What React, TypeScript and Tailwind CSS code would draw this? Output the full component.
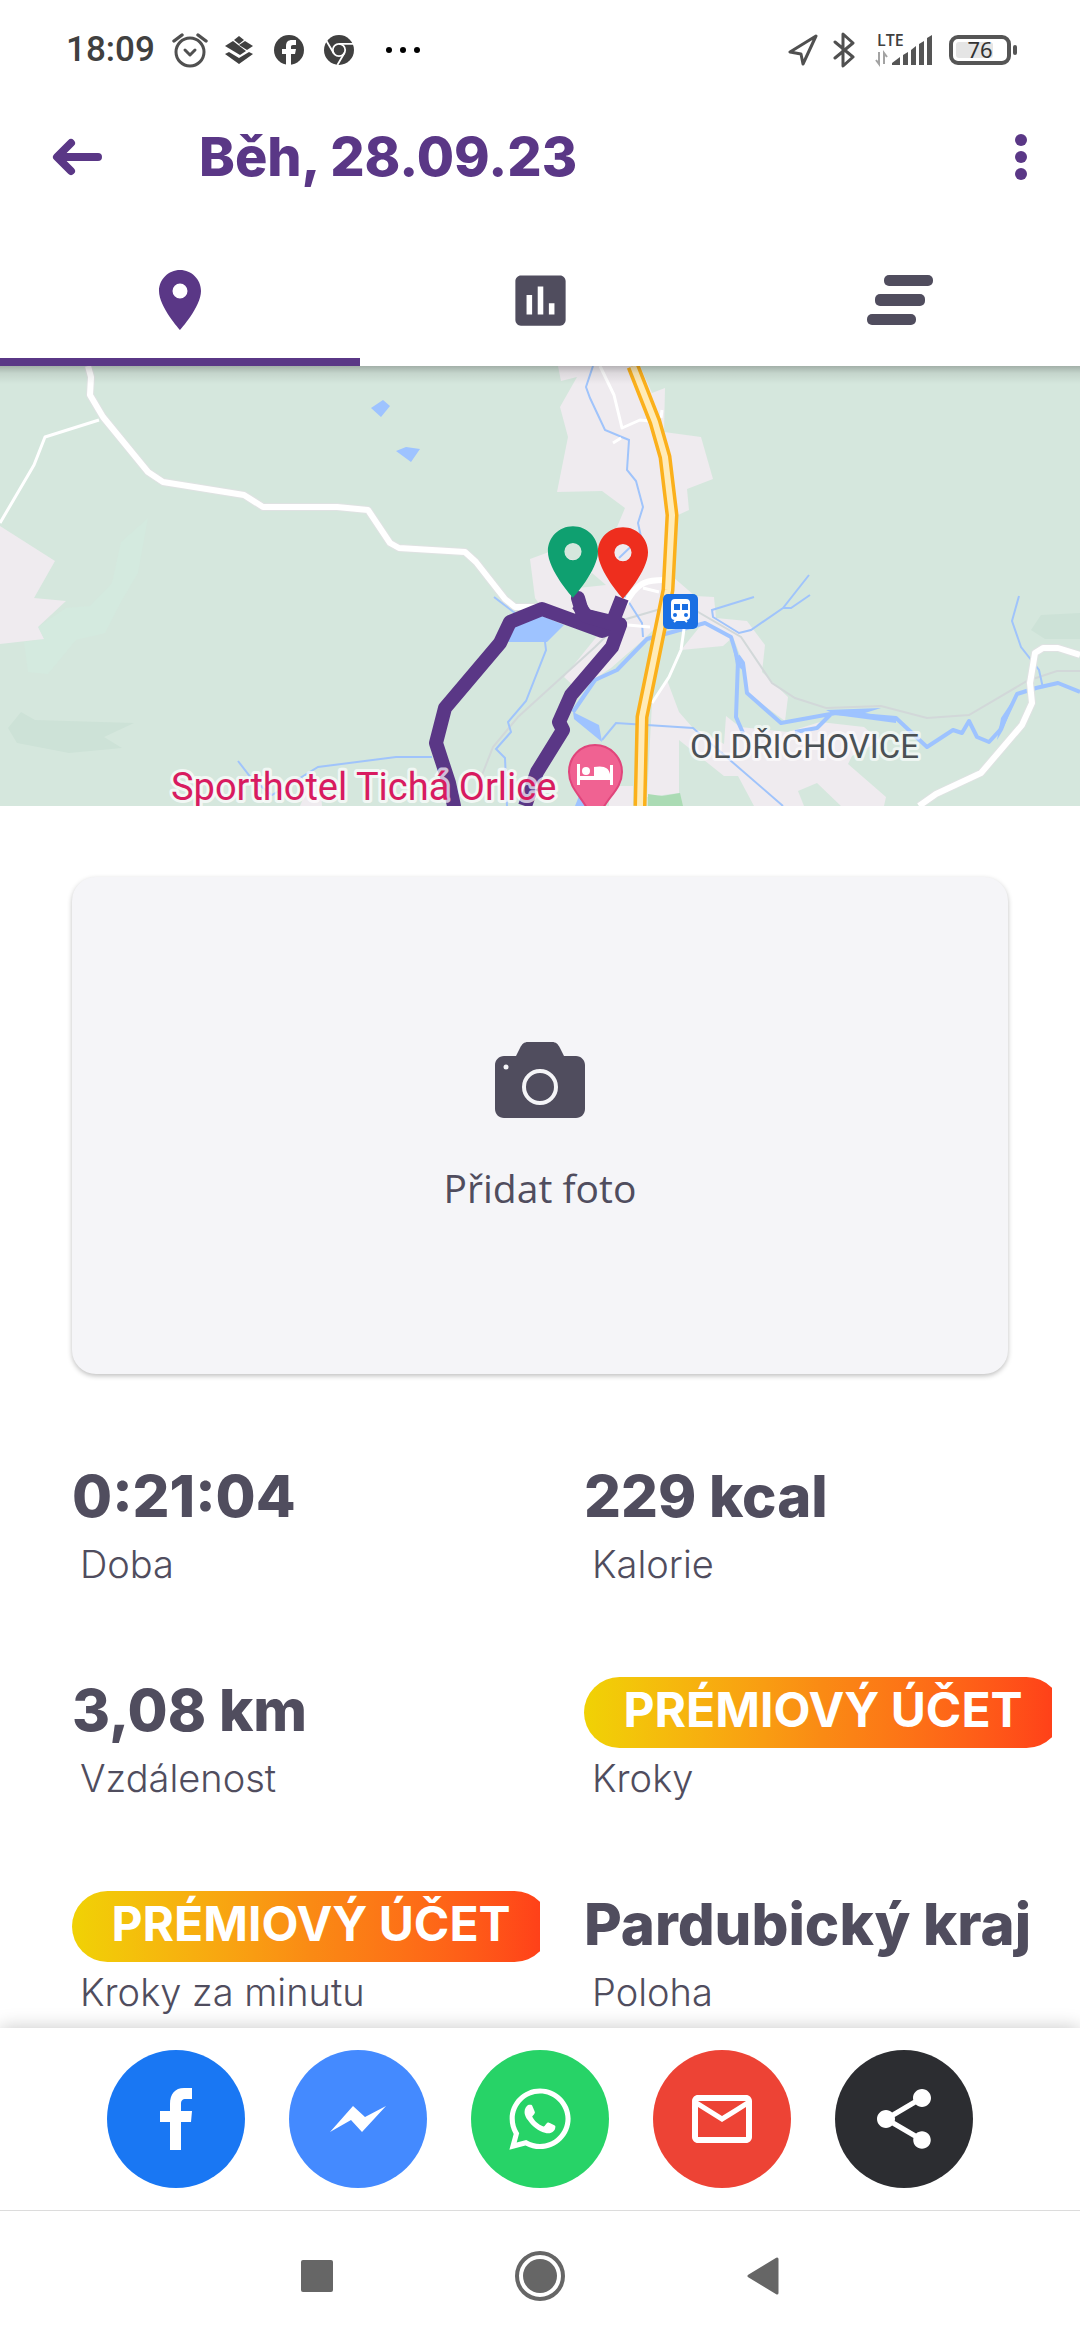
import React, { useState } from "react";
import { FaWhatsapp } from "react-icons/fa";
import { MdAssessment, MdMailOutline, MdPlace, MdShare } from "react-icons/md";

const pinPath =
  "M12 2C8.1 2 5 5.1 5 9c0 5.3 7 13 7 13s7-7.7 7-13c0-3.9-3.1-7-7-7zm0 9.5a2.4 2.4 0 1 1 0-4.8 2.4 2.4 0 0 1 0 4.8z";

const StatusBar: React.FC = () => (
  <div className="flex h-[100px] items-center justify-between pl-[66px] pr-[63px] text-[#404040]">
    <div className="flex items-center">
      <span className="font-[Roboto,sans-serif] text-[35px] font-medium leading-10">18:09</span>
      {/* Alarm */}
      <svg className="ml-[17px] h-9 w-9" viewBox="0 0 36 36" fill="none" stroke="#505050" strokeWidth="3" strokeLinecap="round" strokeLinejoin="round">
        <circle cx="18" cy="20" r="14" />
        <path d="M13 18l5 5 5-5" />
        <path d="M2 9l8-6M34 9l-8-6" strokeWidth="3.4" />
      </svg>
      {/* Layers */}
      <svg className="ml-4 h-[30px] w-[30px]" viewBox="0 0 30 30" fill="#404040">
        <path d="M15 1l5 4-5 4-5-4z" />
        <path d="M9 6l13 10-6 4L1 11z" />
        <path d="M21 6l8 5-6 4-8-5z" />
        <path d="M5 17l10 6 10-6 4 2-14 10L1 19z" />
      </svg>
      {/* Facebook */}
      <svg className="ml-5 h-[30px] w-[30px]" viewBox="0 0 30 30">
        <circle cx="15" cy="15" r="15" fill="#404040" />
        <path fill="#fff" d="M12 30V19H8v-5h4v-3c0-4 2-6 6-6h4v5h-3c-1.500 0-2 .7-2 2v2h5l-1 5h-4v11z" />
      </svg>
      {/* Chrome */}
      <svg className="ml-5 h-[30px] w-[30px]" viewBox="0 0 30 30">
        <circle cx="15" cy="15" r="15" fill="#404040" />
        <g fill="none" stroke="#fff" strokeWidth="1.8">
          <circle cx="15" cy="15" r="6.200" />
          <path d="M15 8.800h14M9.600 18L2.500 6M20.400 18l-7 12" />
        </g>
      </svg>
      <svg className="ml-8 h-[6px] w-[36px]" viewBox="0 0 36 6" fill="#000">
        <circle cx="3" cy="3" r="3" />
        <circle cx="17" cy="3" r="3" />
        <circle cx="31" cy="3" r="3" />
      </svg>
    </div>
    <div className="flex items-center">
      {/* Location */}
      <svg className="h-8 w-[30px]" viewBox="0 0 30 32" fill="none" stroke="#505050" strokeWidth="3" strokeLinejoin="round">
        <path d="M28 2L2 18l11 2 2 10z" />
      </svg>
      {/* Bluetooth */}
      <svg className="ml-[15px] h-9 w-[22px]" viewBox="0 0 22 36" fill="none" stroke="#505050" strokeWidth="3" strokeLinejoin="round" strokeLinecap="round">
        <path d="M2 10l18 15-10 9V2l10 9L2 26" />
      </svg>
      {/* Signal */}
      <svg className="ml-[20px] h-10 w-[58px]" viewBox="0 0 58 40">
        <text x="2" y="16" fontFamily="Open Sans, sans-serif" fontSize="16" fontWeight="600" fill="#404040">LTE</text>
        <path d="M4 22v12l-3-4M9 34V23l3 4" fill="none" stroke="#a3a3a3" strokeWidth="2" />
        <path d="M17 35v-2l8-6v8zM28 35V25l5-3v13zM36 35V20l5-4v19zM44 35V14l5-3v24zM52 35V8l5-3v30z" fill="#555" />
      </svg>
      {/* Battery */}
      <svg className="ml-4 h-[30px] w-[68px]" viewBox="0 0 68 30">
        <rect x="2" y="2" width="58" height="26" rx="7" fill="none" stroke="#555" strokeWidth="4" />
        <rect x="7" y="7" width="37" height="16" rx="3" fill="#e5e5e5" />
        <rect x="64" y="10" width="4" height="10" rx="2" fill="#555" />
        <text x="31" y="23" textAnchor="middle" fontFamily="Noto Sans, sans-serif" fontSize="22" fill="#333">76</text>
      </svg>
    </div>
  </div>
);

const RouteMap: React.FC = () => (
  <svg
    className="block h-[440px] w-full bg-[#d5e7dd]"
    viewBox="0 0 1080 440"
    preserveAspectRatio="xMidYMid slice"
    role="img"
    aria-label="Mapa trasy"
  >
    <defs>
      <linearGradient id="mapShade" x1="0" y1="0" x2="0" y2="1">
        <stop offset="0" stopColor="#000" stopOpacity="0.240" />
        <stop offset="0.400" stopColor="#000" stopOpacity="0.080" />
        <stop offset="1" stopColor="#000" stopOpacity="0" />
      </linearGradient>
    </defs>
    <rect width="1080" height="440" fill="#d5e7dd" />

    {/* Meadows and woods */}
    <path fill="#d4eadf" d="M148 152l-27 24-9 41-22 23-24 2-28 19 6 12-20 3 4 30 20 2 28-34 29-7 17-33 16-27z" />
    <path fill="#cde2d7" d="M21 346l14 8 99 3-30 14 18 11-53 5-52-10-9-15zM1031 264l10-15 39-2v26h-35z" />

    {/* Built-up areas */}
    <g fill="#efebef">
      <path d="M0 160l55 35-21 37 32 3-28 26 6 12-44 5z" />
      <path d="M558 0L561 15 577 11 560 41 568 71 557 126 602 125 625 142 617 161 592 200 549 186 530 193 535 232 540 239 602 264 564 311 578 324 611 302 643 274 655 262 702 258 681 284 723 280 733 271 743 297 747 327 785 355 788 331 762 306 765 279 747 255 716 252 714 231 695 230 673 211 678 149 689 144 687 123 713 113 701 71 664 66 665 22 652 27 640 0z" />
      <path d="M667 314L679 346 692 361 724 378 726 350 740 361 788 366 820 356 864 361 880 375 852 390 848 398 886 431 884 440 841 440 817 417 798 425 804 440 754 440 738 410 724 410 679 374 679 427 647 431 652 337z" />
      <path d="M609 420h24v20h-24zM312 412l8 2 2 26h-22z" />
    </g>
    <path fill="#d5e7dd" d="M592 207l14 12-28 3z" />
    <path fill="#abdbb4" d="M648 428l14 2 18-3 3 13h-35z" />

    {/* Lakes */}
    <g fill="#9ec3ff">
      <path d="M383 34l7 6-9 11-10-9zM396 85l10-4 14 2-9 13z" />
      <path d="M508 276l7-20 25-7 24 10-17 17z" />
      <path d="M573 346l26 13 3 17-28-23zM731 271l10 26 3 8-8-6z" />
      <path d="M826 344l55-2-16 5 31 6 0 4-60-8zM1017 328l-14 36-6 10 4-22zM575 440l4-10 6 10z" />
    </g>

    {/* Railway */}
    <path
      fill="none"
      stroke="#d2d8d9"
      strokeWidth="2"
      d="M482 409l11-28 25-30 77-70 28-27 34-10 41 2 43 25 31 46 23 15 31 10 55-2 46 12 42-3 58-34 30-10h23"
    />

    {/* Streams */}
    <g fill="none" stroke="#a0c4fb" strokeWidth="2">
      <path d="M238 395l14 18 20 16 28-17 18-11 78-10h36M494 231l21 16" />
      <path d="M545 276l1 8-20 51-18 21 3 10-15 17 9 9 2 48" />
      <path d="M593 0l-7 21 4 11 15 32 24 10-2 30 9 11 7 26-5 16 3 14-22 21M623 227l19 30 1 14" />
      <path d="M754 231l-42 13 1 7 26 16 12-3 32-22 26-33M783 242h8l19-13" />
      <path d="M1019 230l-7 25 9 26 18 23 4 18M602 374l14-17 77 5 90 78" />
    </g>
    <g fill="none" stroke="#9ec3ff" strokeWidth="4" strokeLinejoin="round">
      <path d="M573 346l22-32 22-10 30-31 58-16 26 14 7 23-2 57 7 16" />
      <path d="M738 290l5 7 4 30 34 30 55-10 60 5 31 29 26-17 9 3 7-12 8 16 12 5 11-12 17-36 19-6 22-5 22 9M833 346l-16 16-22 4" />
    </g>

    {/* Local roads */}
    <g fill="none" stroke="#fff" strokeLinejoin="round">
      <path strokeWidth="3" d="M99 54L45 71 34 99 0 157M600 0l14 29 8 33 18-8 10 1M613 77l8-5M643 222l16 4M628 259l22 2M684 263l-3 21-12 27-17 26M662 44l-1 8" />
      <path stroke="#dfe2e2" strokeWidth="8" d="M88 0l3 11-1 18 13 22 45 55 15 10 81 13 19 12h74l31 3 22 33 9 5 66 4 11 10 29 37 10 8h30M1080 289l-22-7h-15l-8 5-5 30 2 20-10 22-41 48-45 21-17 12" />
      <path strokeWidth="6" d="M88 0l3 11-1 18 13 22 45 55 15 10 81 13 19 12h74l31 3 22 33 9 5 66 4 11 10 29 37 10 8h30M624 239l9-13c7-8 12-12 31-12M1080 289l-22-7h-15l-8 5-5 30 2 20-10 22-41 48-45 21-17 12" />
    </g>

    {/* Main road */}
    <g fill="none" strokeLinejoin="round">
      <path stroke="#fbb01b" strokeWidth="13" d="M633 0l22 56 10 35 7 58-4 75-26 127-2 89" />
      <path stroke="#ffebb8" strokeWidth="6" d="M633 0l22 56 10 35 7 58-4 75-26 127-2 89" />
    </g>

    {/* Recorded track */}
    <g fill="none" stroke="#5a3786" strokeWidth="14" strokeLinejoin="round">
      <path d="M454 440l-5-23-13-40 9-35 55-65 10-21 32-13 60 22 18-7-37-9-5-17" strokeLinecap="round" />
      <path d="M578 238l8 12 34 10M622 232l-9 23 7 4-8 22-41 48-12 27 4 8-26 42-12 34" />
    </g>

    {/* Train station */}
    <rect x="663" y="228" width="35" height="35" rx="5" fill="#1a6fe3" />
    <rect x="671" y="233" width="19" height="21" rx="4" fill="#fff" />
    <path d="M674 238h6v6h-6zM682 238h6v6h-6z" fill="#1a6fe3" />
    <circle cx="675" cy="249" r="2" fill="#1a6fe3" />
    <circle cx="686" cy="249" r="2" fill="#1a6fe3" />
    <path d="M674 256l2-2h9l2 2" fill="none" stroke="#fff" strokeWidth="2" />

    {/* Hotel */}
    <path d="M595 379c-15 0-26 12-26 27 0 16 12 24 19 38h14c7-14 20-22 20-38 0-15-12-27-27-27z" fill="#f06292" stroke="#e0457b" strokeWidth="2" />
    <path d="M577 398h3v12h14v-9c10-2 15 1 16 7v-9h3v20h-3v-5h-30v5h-3z" fill="#fff" />
    <circle cx="586" cy="405" r="4" fill="#fff" />

    {/* Start and finish */}
    <path fill="#0fa070" fillRule="evenodd" transform="translate(530 153) scale(3.580)" d={pinPath} />
    <path fill="#ee2e1e" fillRule="evenodd" transform="translate(580 154) scale(3.580)" d={pinPath} />

    <g fontFamily="Roboto, sans-serif" strokeLinejoin="round" paintOrder="stroke">
      <text x="171" y="434" fontSize="38" fill="#d81b60" stroke="#fff" strokeOpacity="0.700" strokeWidth="6">Sporthotel Tichá Orlice</text>
      <text x="690" y="392" fontSize="33" fill="#4a5054" stroke="#fff" strokeOpacity="0.600" strokeWidth="6">OLDŘICHOVICE</text>
    </g>
    <rect width="1080" height="18" fill="url(#mapShade)" />
  </svg>
);

const PremiumBadge: React.FC = () => (
  <button
    type="button"
    className="mt-1 flex h-[71px] w-[478px] shrink-0 items-center justify-center rounded-full bg-linear-to-r from-[#f0d205] via-[#fa8a14] to-[#ff3c19] pb-1 text-[48px] font-bold leading-[60px] whitespace-nowrap text-white"
  >
    PRÉMIOVÝ ÚČET
  </button>
);

const stats = [
  { label: "Doba", value: "0:21:04" },
  { label: "Kalorie", value: "229 kcal" },
  { label: "Vzdálenost", value: "3,08 km" },
  { label: "Kroky", value: null },
  { label: "Kroky za minutu", value: null },
  { label: "Poloha", value: "Pardubický kraj" },
];

const tabs = [
  { id: "map", label: "Mapa", icon: <MdPlace className="h-[72px] w-[72px]" /> },
  { id: "charts", label: "Grafy", icon: <MdAssessment className="h-[67px] w-[67px]" /> },
  {
    id: "laps",
    label: "Úseky",
    icon: (
      <svg className="h-[50px] w-[66px]" viewBox="0 0 66 50" fill="currentColor">
        <rect x="17" y="0" width="49" height="11" rx="5" />
        <rect x="8" y="19" width="50" height="12" rx="5" />
        <rect x="0" y="39" width="49" height="11" rx="5" />
      </svg>
    ),
  },
];

const shareTargets = [
  {
    label: "Facebook",
    color: "bg-[#1977f3]",
    icon: (
      <svg className="h-[62px] w-8" viewBox="0 0 32 62" fill="currentColor">
        <path d="M10 62V34H0V23h10v-7C10 6 15 0 24 0h8v11h-6c-4 0-5 2-5 5v7h11l-1 11H21v28z" />
      </svg>
    ),
  },
  {
    label: "Messenger",
    color: "bg-[#448aff]",
    icon: (
      <svg className="h-[26px] w-14" viewBox="0 0 56 26" fill="currentColor">
        <path d="M0 26L23 0l12 11L56 0 32 26 21 14z" />
      </svg>
    ),
  },
  { label: "WhatsApp", color: "bg-[#27d367]", icon: <FaWhatsapp className="h-[70px] w-[70px]" /> },
  { label: "E-mail", color: "bg-[#ed4335]", icon: <MdMailOutline className="h-[72px] w-[72px]" /> },
  { label: "Sdílet", color: "bg-[#2c2d31]", icon: <MdShare className="h-[72px] w-[72px]" /> },
];

const App: React.FC = () => {
  const [activeTab, setActiveTab] = useState("map");

  return (
    <div className="flex min-h-screen flex-col overflow-hidden bg-white font-[Inter,sans-serif] text-[#504d5e]">
      <StatusBar />

      {/* Header */}
      <header className="flex h-[114px] items-center pl-[52px] pr-[53px] text-[#5a3786]">
        <button type="button" aria-label="Zpět">
          <svg className="h-[38px] w-[50px]" viewBox="0 0 50 38" fill="none" stroke="currentColor" strokeWidth="8" strokeLinecap="round" strokeLinejoin="round">
            <path d="M46 19H6M19 5L5 19l14 14" />
          </svg>
        </button>
        <h1 className="ml-[97px] flex-1 text-[54px] font-extrabold leading-[64px]">Běh, 28.09.23</h1>
        <button type="button" aria-label="Další možnosti">
          <svg className="h-[46px] w-3" viewBox="0 0 12 46" fill="currentColor">
            <circle cx="6" cy="6" r="6" />
            <circle cx="6" cy="23" r="6" />
            <circle cx="6" cy="40" r="6" />
          </svg>
        </button>
      </header>

      {/* Tabs */}
      <div role="tablist" className="grid h-[152px] grid-cols-3">
        {tabs.map((tab) => (
          <button
            key={tab.id}
            type="button"
            role="tab"
            aria-label={tab.label}
            aria-selected={activeTab === tab.id}
            onClick={() => setActiveTab(tab.id)}
            className={`flex items-center justify-center border-b-8 pt-7 ${
              activeTab === tab.id ? "border-[#5a3786] text-[#5a3786]" : "border-transparent"
            }`}
          >
            {tab.icon}
          </button>
        ))}
      </div>

      <RouteMap />

      <main className="flex-1 pt-[71px]">
        <div className="px-[72px]">
          <button
            type="button"
            className="flex h-[497px] w-full flex-col items-center rounded-3xl bg-[#f5f5f8] pt-[165px] shadow-[0_2px_5px_rgba(0,0,0,0.25)]"
          >
            <svg className="h-[76px] w-[90px]" viewBox="0 0 90 76">
              <path
                fill="#504d5e"
                d="M9 14h12l4-8c2-4 4-6 8-6h24c4 0 6 2 8 6l4 8h12c5 0 9 4 9 9v44c0 5-4 9-9 9H9c-5 0-9-4-9-9V23c0-5 4-9 9-9z"
              />
              <circle cx="45" cy="45" r="16" fill="none" stroke="#f5f5f8" strokeWidth="4" />
              <circle cx="11" cy="25" r="2.500" fill="#f5f5f8" />
            </svg>
            <span className="mt-[44px] font-['Open_Sans',sans-serif] text-[39px] leading-[52px]">Přidat foto</span>
          </button>
        </div>

        {/* Statistics */}
        <dl className="mt-[78px] grid grid-cols-2 gap-x-11 pl-[72px] pr-7">
          {stats.map((stat) => (
            <div key={stat.label} className="flex h-[214px] min-w-0 flex-col-reverse justify-end">
              <dt className="pl-2 text-[38px] font-light leading-[48px]">{stat.label}</dt>
              <dd className="flex h-[88px] items-center overflow-hidden text-[58px] font-extrabold leading-[88px] whitespace-nowrap">
                {stat.value ?? <PremiumBadge />}
              </dd>
            </div>
          ))}
        </dl>
      </main>

      {/* Share bar */}
      <footer className="fixed inset-x-0 bottom-0 bg-white shadow-[0_0_18px_rgba(0,0,0,0.22)]">
        <div className="flex h-[183px] items-center justify-center gap-11 border-b border-[#dcdcdc]">
          {shareTargets.map((target) => (
            <button
              key={target.label}
              type="button"
              aria-label={target.label}
              className={`flex h-[138px] w-[138px] items-center justify-center rounded-full text-white ${target.color}`}
            >
              {target.icon}
            </button>
          ))}
        </div>

        {/* System navigation */}
        <nav className="flex h-[129px] items-center justify-center gap-[182px] text-[#666]">
          <button type="button" aria-label="Poslední aplikace">
            <svg className="h-8 w-8" viewBox="0 0 32 32" fill="currentColor">
              <rect width="32" height="32" rx="2" />
            </svg>
          </button>
          <button type="button" aria-label="Domů">
            <svg className="h-[50px] w-[50px]" viewBox="0 0 50 50" fill="currentColor">
              <circle cx="25" cy="25" r="17" />
              <circle cx="25" cy="25" r="23" fill="none" stroke="currentColor" strokeWidth="4" />
            </svg>
          </button>
          <button type="button" aria-label="Zpět v systému">
            <svg className="h-[38px] w-8" viewBox="0 0 32 38" fill="currentColor" stroke="currentColor" strokeWidth="3" strokeLinejoin="round">
              <path d="M2 19L30 2v34z" />
            </svg>
          </button>
        </nav>
      </footer>
    </div>
  );
};

export default App;
